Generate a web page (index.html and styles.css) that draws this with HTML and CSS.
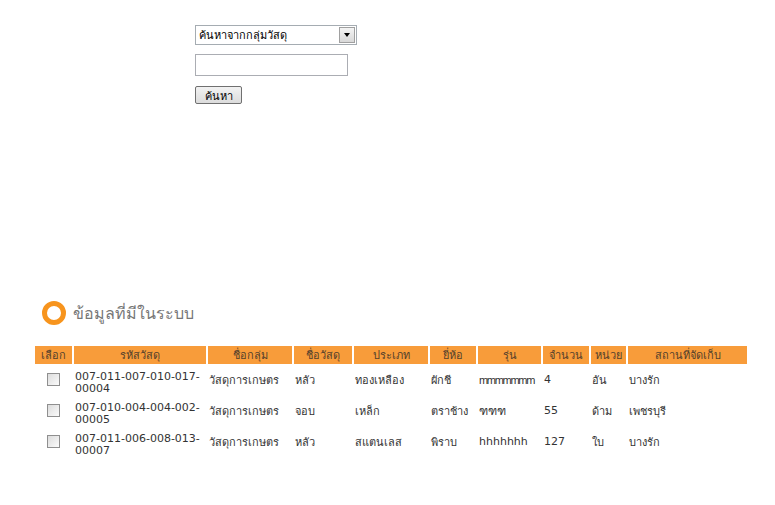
FILE: index.html
```html
<!DOCTYPE html>
<html>
<head>
  <title>ข้อมูลวัสดุ</title>
  <meta charset="utf-8"/>
  <link rel="stylesheet" href="styles.css">
</head>
<body>

  <div id="search-section">
    <form id="searchForm">
      <div class="select-wrap">
        <select name="group" class="group-select">
          <option>ค้นหาจากกลุ่มวัสดุ</option>
        </select>
        <span class="select-arrow"></span>
      </div>
      <input type="text" name="keyword" class="keyword" />
      <button type="submit" class="search-btn">ค้นหา</button>
    </form>
  </div>

  <div id="data-section">
    <h2 class="section-title"><span class="ring"></span>ข้อมูลที่มีในระบบ</h2>

    <table class="items">
      <thead>
        <tr>
          <th class="c-check">เลือก</th>
          <th class="c-code">รหัสวัสดุ</th>
          <th class="c-group">ชื่อกลุ่ม</th>
          <th class="c-name">ชื่อวัสดุ</th>
          <th class="c-type">ประเภท</th>
          <th class="c-brand">ยี่ห้อ</th>
          <th class="c-model">รุ่น</th>
          <th class="c-qty">จำนวน</th>
          <th class="c-unit">หน่วย</th>
          <th class="c-place">สถานที่จัดเก็บ</th>
        </tr>
      </thead>
      <tbody>
        <tr>
          <td class="c-check"><input type="checkbox" class="chk" /></td>
          <td class="code">007-011-007-010-017-<br>00004</td>
          <td>วัสดุการเกษตร</td>
          <td>หลัว</td>
          <td>ทองเหลือง</td>
          <td>ผักชี</td>
          <td class="narrow">mmmmmmm</td>
          <td class="latin">4</td>
          <td>อัน</td>
          <td>บางรัก</td>
        </tr>
        <tr>
          <td class="c-check"><input type="checkbox" class="chk" /></td>
          <td class="code">007-010-004-004-002-<br>00005</td>
          <td>วัสดุการเกษตร</td>
          <td>จอบ</td>
          <td>เหล็ก</td>
          <td>ตราช้าง</td>
          <td>ฑฑฑ</td>
          <td class="latin">55</td>
          <td>ด้าม</td>
          <td>เพชรบุรี</td>
        </tr>
        <tr>
          <td class="c-check"><input type="checkbox" class="chk" /></td>
          <td class="code">007-011-006-008-013-<br>00007</td>
          <td>วัสดุการเกษตร</td>
          <td>หลัว</td>
          <td>สแตนเลส</td>
          <td>พิราบ</td>
          <td class="latin">hhhhhhh</td>
          <td class="latin">127</td>
          <td>ใบ</td>
          <td>บางรัก</td>
        </tr>
      </tbody>
    </table>
  </div>

</body>
</html>
```

FILE: styles.css
```css
body {
    background-color: #fff;
    margin: 0px;
    padding: 0px;
    font-family: Tahoma, "DejaVu Sans", sans-serif;
    font-size: 11px;
    color: #333;
}

#search-section {
    padding: 25px 0px 0px 195px;
}
#searchForm {
    display: flex;
    flex-direction: column;
    align-items: flex-start;
}

.select-wrap {
    position: relative;
    width: 162px;
    height: 20px;
}
.group-select {
    appearance: none;
    -webkit-appearance: none;
    width: 162px;
    height: 20px;
    margin: 0px;
    padding: 0px 3px;
    border: 1px solid #a5acb2;
    border-radius: 0px;
    background-color: #fff;
    font-family: Tahoma, "DejaVu Sans", sans-serif;
    font-size: 11px;
    color: #000;
}
.select-arrow {
    position: absolute;
    top: 2px;
    right: 2px;
    width: 14px;
    height: 14px;
    border: 1px solid #a0a0a0;
    background: linear-gradient(#f4f4f4, #d8d8d8);
    pointer-events: none;
}
.select-arrow::after {
    content: "";
    position: absolute;
    left: 4px;
    top: 5px;
    border-left: 3px solid transparent;
    border-right: 3px solid transparent;
    border-top: 4px solid #000;
}

.keyword {
    width: 153px;
    height: 22px;
    box-sizing: border-box;
    margin: 9px 0px 0px 0px;
    border: 1px solid #abadb3;
    padding: 0px 3px;
}

.search-btn {
    margin-top: 10px;
    height: 18px;
    width: 47px;
    padding: 0px;
    border: 1px solid #707070;
    border-radius: 2px;
    background: linear-gradient(#f2f2f2, #dcdcdc);
    font-family: Tahoma, "DejaVu Sans", sans-serif;
    font-size: 11px;
    color: #000;
}

#data-section {
    margin-top: 196px;
    padding-left: 33px;
}

.section-title {
    display: flex;
    align-items: center;
    margin: 0px 0px 0px 9px;
    height: 26px;
    font-size: 16px;
    font-weight: normal;
    color: #777;
}
.ring {
    width: 14px;
    height: 14px;
    border: 5px solid #f7941d;
    border-radius: 50%;
    margin-right: 7px;
}

.items {
    margin-top: 20px;
    border-collapse: separate;
    border-spacing: 2px 0px;
    table-layout: fixed;
    width: 716px;
}
.items th {
    background-color: #f89c3a;
    color: #54412c;
    font-weight: normal;
    height: 16px;
    padding: 0px;
    text-align: center;
}
.items td {
    padding: 0px 1px;
    height: 31px;
    vertical-align: middle;
    text-align: left;
}
.items td.c-check {
    text-align: center;
}
.items td.code {
    font-family: "DejaVu Sans", sans-serif;
    font-size: 11px;
    line-height: 12px;
    vertical-align: bottom;
    color: #333;
}
.items .latin {
    font-family: "DejaVu Sans", sans-serif;
    font-size: 11px;
}
.items .narrow {
    font-family: "Liberation Sans", sans-serif;
    font-size: 11px;
    letter-spacing: -1.3px;
}

.c-check { width: 37px; }
.c-code { width: 132px; }
.c-group { width: 84px; }
.c-name { width: 58px; }
.c-type { width: 74px; }
.c-brand { width: 46px; }
.c-model { width: 63px; }
.c-qty { width: 46px; }
.c-unit { width: 35px; }
.c-place { width: 119px; }

.chk {
    appearance: none;
    -webkit-appearance: none;
    width: 13px;
    height: 13px;
    margin: 0px;
    border: 1px solid #8f8f8f;
    background: linear-gradient(135deg, #dcdcdc, #fbfbfb);
    vertical-align: middle;
}
```
